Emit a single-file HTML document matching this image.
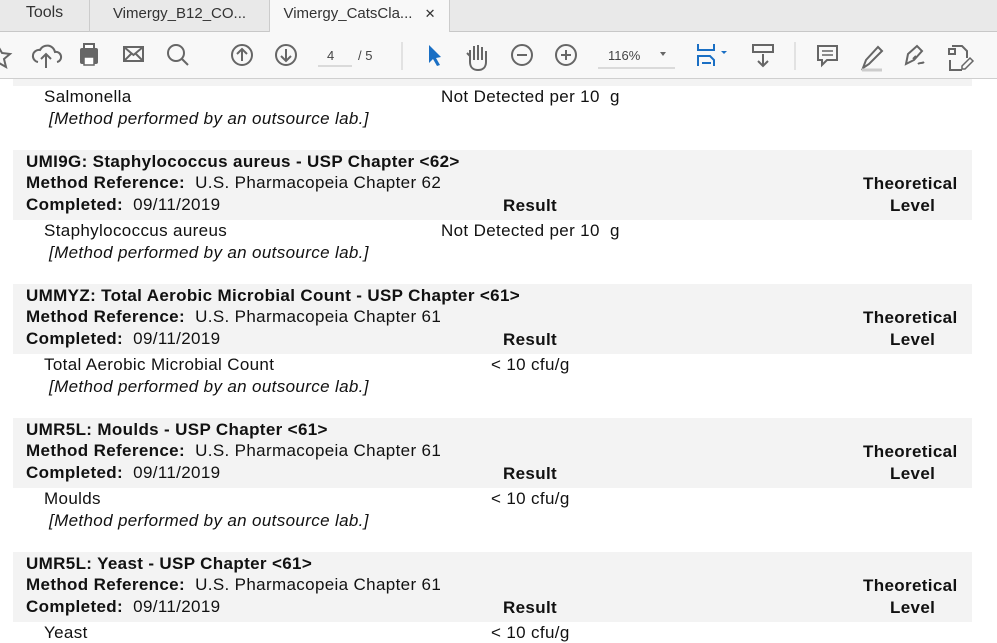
<!DOCTYPE html>
<html><head><meta charset="utf-8"><style>
*{margin:0;padding:0;box-sizing:border-box}
body{width:997px;height:642px;overflow:hidden;background:#fff;font-family:"Liberation Sans",Arial,sans-serif;position:relative;color:#111}
.tabs{position:absolute;left:0;top:0;width:997px;height:32px;background:#e9e9e9;border-bottom:1px solid #c8c8c8}
.tab{position:absolute;top:0;height:32px;font-size:15px;color:#333;line-height:28px;text-align:center}
.tb{position:absolute;left:0;top:32px;width:997px;height:47px;background:#f8f8f8;border-bottom:1px solid #cfcfcf}
.a{position:absolute;white-space:nowrap;font-size:17px;letter-spacing:0.35px;line-height:20px}
.b{font-weight:bold}
.i{font-style:italic}
.band{position:absolute;left:13px;width:959px;background:#f3f3f3}
</style></head><body>
<div class="tabs">
<div class="tab" style="left:0;width:90px;border-right:1px solid #ccc;line-height:26px;font-size:16px">Tools</div>
<div class="tab" style="left:90px;width:180px;border-right:1px solid #ccc">Vimergy_B12_CO...</div>
<div class="tab" style="left:270px;width:180px;background:#f8f8f8;height:33px;border-right:1px solid #ccc">Vimergy_CatsCla... <span style="font-size:13px;margin-left:8px">✕</span></div>
</div>
<div class="tb">
<svg width="997" height="47" style="position:absolute;left:0;top:0" fill="none" stroke="#666" stroke-width="2">
<path d="M-2 14 L2 21 L10 22 L4 27 L6 35 L-1 31" />
<path d="M38 30 a6 6 0 0 1 2-12 a8 8 0 0 1 15 2 a5 5 0 0 1 2 10" /><path d="M46 36 V22 M41 27 l5-5 5 5"/>
<rect x="80" y="16" width="18" height="16" rx="2" fill="#666" stroke="none"/><rect x="84" y="12" width="10" height="5" fill="#fff"/><rect x="84" y="25" width="10" height="8" fill="#fff" stroke="#666" stroke-width="1.5"/>
<rect x="124" y="15" width="19" height="14"/><path d="M124 15 l9.5 8 9.5-8 M124 29 l7-7 M143 29 l-7-7"/>
<circle cx="176" cy="21" r="8"/><path d="M182 27 l6 6"/>
<circle cx="242" cy="23" r="10"/><path d="M242 29 V17 M237 22 l5-5 5 5"/>
<circle cx="286" cy="23" r="10"/><path d="M286 17 V29 M281 24 l5 5 5-5"/>
<path d="M318 34 H352" stroke="#bbb" stroke-width="1"/>
<path d="M402 10 V38" stroke="#ccc" stroke-width="1"/>
<path d="M429 13 L429 31 L433 27 L437 34 L440 33 L436 26 L441 25 Z" fill="#1a6fc4" stroke="none"/>
<path d="M470 30 V18 M474 28 V14 M478 28 V13 M482 28 V15 M486 28 V19 M470 30 c0 6 4 8 8 8 c5 0 8-3 8-8 V19 M470 24 l-3-3"/>
<circle cx="522" cy="23" r="10"/><path d="M517 23 H527"/>
<circle cx="566" cy="23" r="10"/><path d="M561 23 H571 M566 18 V28"/>
<path d="M598 36 H675" stroke="#bbb" stroke-width="1"/>
<path d="M660 20 l3 4 3-4Z" fill="#666" stroke="none"/>
<path d="M698 12 V18 H714 V12 M698 34 V24 H710 l4 4 V34 M702 31 H711" stroke="#1a6fc4"/><path d="M721 19 l3 3 3-3Z" fill="#1a6fc4" stroke="none"/>
<rect x="753" y="13" width="20" height="7" /><path d="M763 22 V34 M758 29 l5 5 5-5"/>
<path d="M795 10 V38" stroke="#ccc" stroke-width="1"/>
<path d="M818 14 H837 V28 H827 L822 33 V28 H818 Z"/><path d="M822 19 H833 M822 23 H833" stroke-width="1.5"/>
<path d="M863 36 l3-8 12-13 4 4 -13 13 Z"/><path d="M862 38 H882" stroke="#ccc" stroke-width="3"/>
<path d="M906 32 l2-10 9-8 5 5 -8 9 Z M916 24 l-3 3"/><path d="M918 32 c2-2 4 0 6-2"/>
<path d="M952 14 H962 l5 5 V26 M950 28 V38 H962 M949 17 h6 v5 h-6z" /><path d="M962 34 l8-8 3 3 -8 8 h-3z" stroke-width="1.5"/>
</svg>
<div class="a" style="left:327px;top:14px;font-size:13px;letter-spacing:0;color:#444">4</div>
<div class="a" style="left:358px;top:14px;font-size:13px;letter-spacing:0;color:#444">/ 5</div>
<div class="a" style="left:608px;top:14px;font-size:13px;letter-spacing:0;color:#444">116%</div>
</div>

<div class="band" style="top:79px;height:7px"></div>
<div class="a" style="left:44px;top:87px">Salmonella</div>
<div class="a" style="left:441px;top:87px">Not Detected per 10&nbsp; g</div>
<div class="a i" style="left:49px;top:109px">[Method performed by an outsource lab.]</div>

<div class="band" style="top:150px;height:70px"></div>
<div class="a b" style="left:26px;top:152px">UMI9G: Staphylococcus aureus - USP Chapter &lt;62&gt;</div>
<div class="a" style="left:26px;top:173px"><b>Method Reference:</b>&nbsp; U.S. Pharmacopeia Chapter 62</div>
<div class="a" style="left:26px;top:195px"><b>Completed:</b>&nbsp; 09/11/2019</div>
<div class="a b" style="left:503px;top:196px">Result</div>
<div class="a b" style="left:863px;top:174px">Theoretical</div>
<div class="a b" style="left:890px;top:196px">Level</div>
<div class="a" style="left:44px;top:221px">Staphylococcus aureus</div>
<div class="a" style="left:441px;top:221px">Not Detected per 10&nbsp; g</div>
<div class="a i" style="left:49px;top:243px">[Method performed by an outsource lab.]</div>

<div class="band" style="top:284px;height:70px"></div>
<div class="a b" style="left:26px;top:286px">UMMYZ: Total Aerobic Microbial Count - USP Chapter &lt;61&gt;</div>
<div class="a" style="left:26px;top:307px"><b>Method Reference:</b>&nbsp; U.S. Pharmacopeia Chapter 61</div>
<div class="a" style="left:26px;top:329px"><b>Completed:</b>&nbsp; 09/11/2019</div>
<div class="a b" style="left:503px;top:330px">Result</div>
<div class="a b" style="left:863px;top:308px">Theoretical</div>
<div class="a b" style="left:890px;top:330px">Level</div>
<div class="a" style="left:44px;top:355px">Total Aerobic Microbial Count</div>
<div class="a" style="left:491px;top:355px">&lt; 10 cfu/g</div>
<div class="a i" style="left:49px;top:377px">[Method performed by an outsource lab.]</div>

<div class="band" style="top:418px;height:70px"></div>
<div class="a b" style="left:26px;top:420px">UMR5L: Moulds - USP Chapter &lt;61&gt;</div>
<div class="a" style="left:26px;top:441px"><b>Method Reference:</b>&nbsp; U.S. Pharmacopeia Chapter 61</div>
<div class="a" style="left:26px;top:463px"><b>Completed:</b>&nbsp; 09/11/2019</div>
<div class="a b" style="left:503px;top:464px">Result</div>
<div class="a b" style="left:863px;top:442px">Theoretical</div>
<div class="a b" style="left:890px;top:464px">Level</div>
<div class="a" style="left:44px;top:489px">Moulds</div>
<div class="a" style="left:491px;top:489px">&lt; 10 cfu/g</div>
<div class="a i" style="left:49px;top:511px">[Method performed by an outsource lab.]</div>

<div class="band" style="top:552px;height:70px"></div>
<div class="a b" style="left:26px;top:554px">UMR5L: Yeast - USP Chapter &lt;61&gt;</div>
<div class="a" style="left:26px;top:575px"><b>Method Reference:</b>&nbsp; U.S. Pharmacopeia Chapter 61</div>
<div class="a" style="left:26px;top:597px"><b>Completed:</b>&nbsp; 09/11/2019</div>
<div class="a b" style="left:503px;top:598px">Result</div>
<div class="a b" style="left:863px;top:576px">Theoretical</div>
<div class="a b" style="left:890px;top:598px">Level</div>
<div class="a" style="left:44px;top:623px">Yeast</div>
<div class="a" style="left:491px;top:623px">&lt; 10 cfu/g</div>
</body></html>
